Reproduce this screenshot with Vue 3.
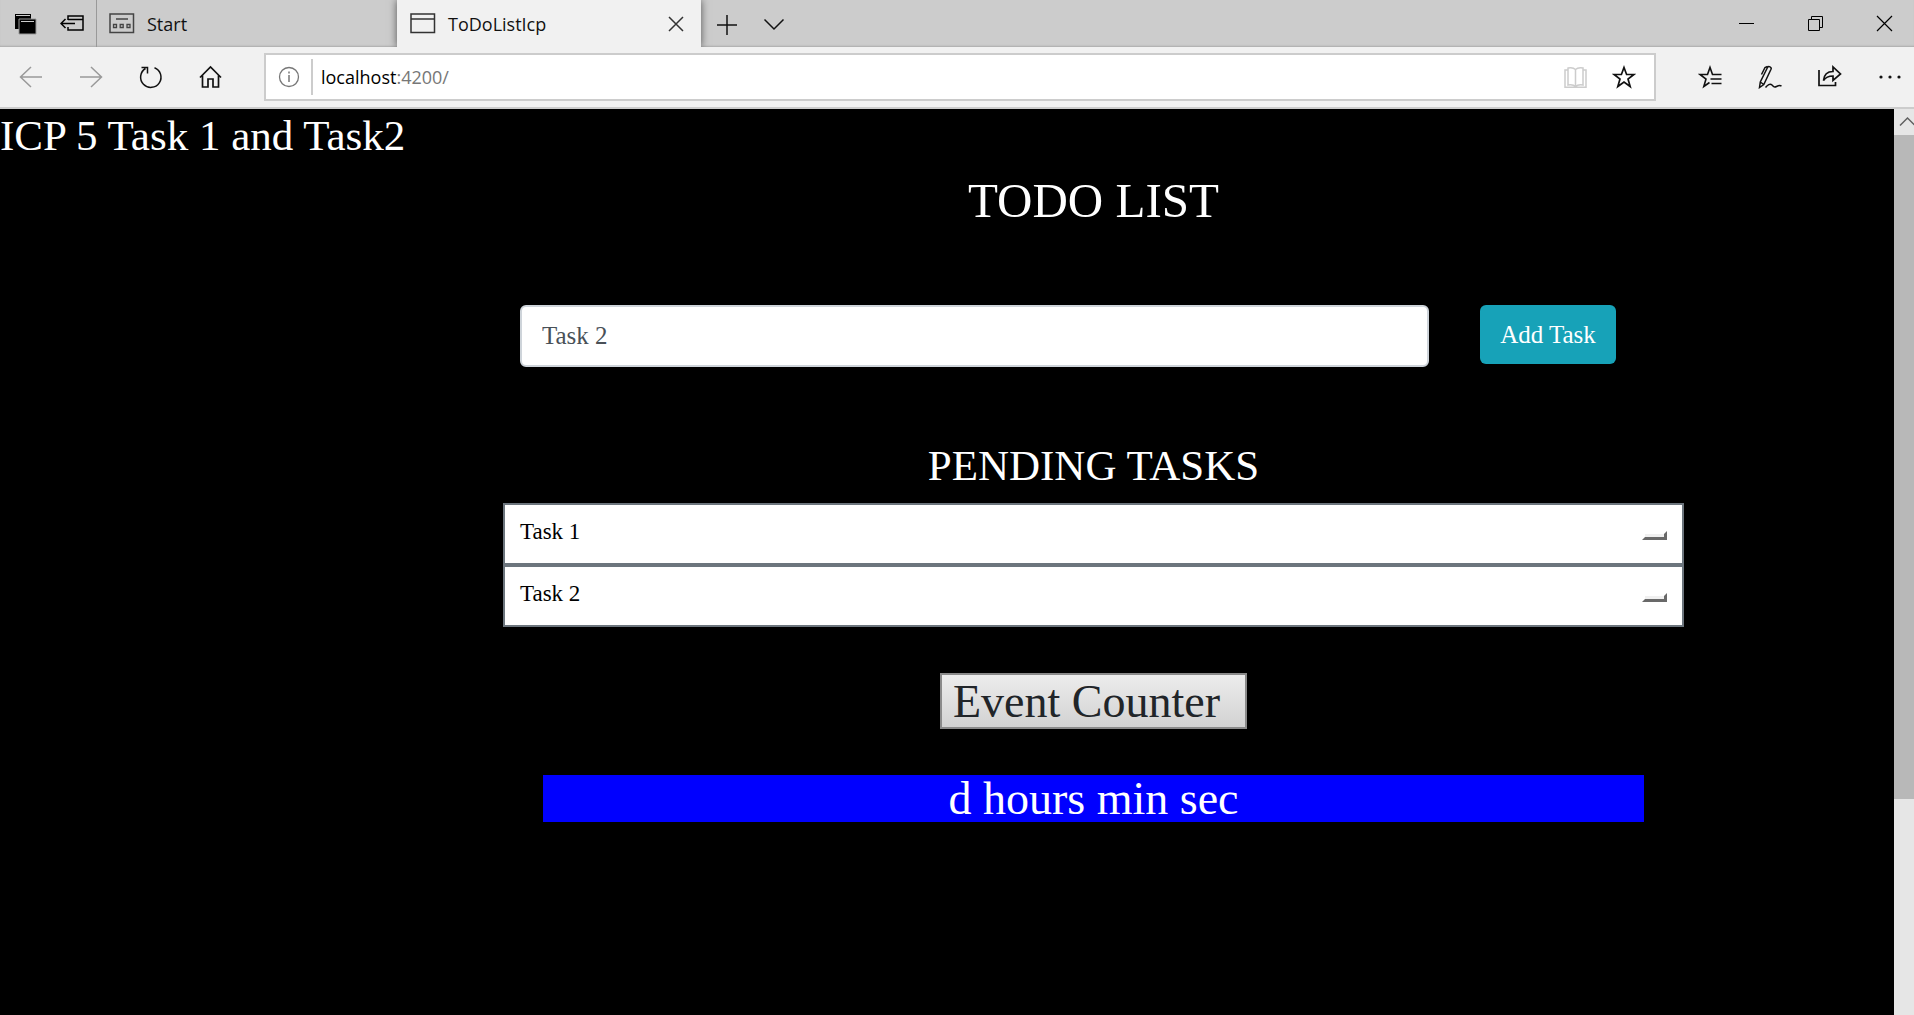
<script setup>
import { ref } from 'vue'

const draft = ref('Task 2')
const tasks = ref(['Task 1', 'Task 2'])

function addTask() {
  if (draft.value.trim()) tasks.value.push(draft.value.trim())
}

function removeTask(index) {
  tasks.value.splice(index, 1)
}
</script>

<template>
  <div class="browser">
    <header class="tabbar">
      <div class="tab-tools">
        <button class="icon" aria-label="Tabs you've set aside">
          <svg width="24" height="24" viewBox="0 0 24 24">
            <path d="M1 2h16v15H1z" fill="#000" />
            <path d="M2 3.500h14" stroke="#ccc" />
            <path d="M5 7h17v15H5z" fill="#000" stroke="#999" stroke-width="1" />
            <path d="M7 9.500h13" stroke="#ccc" />
          </svg>
        </button>
        <button class="icon" aria-label="Set these tabs aside">
          <svg width="24" height="24" viewBox="0 0 24 24" fill="none" stroke="#000" stroke-width="1.500">
            <path d="M8 8V4h15v14H8v-3M8 7.500h15M1 11.500h14M5.500 7L1 11.500 5.500 16" />
          </svg>
        </button>
      </div>
      <button class="tab tab-start">
        <svg width="26" height="24" viewBox="0 0 26 24" fill="none" stroke="#444" stroke-width="1.500">
          <path d="M1 2h23.500v18.500H1zM7 7h12" />
          <path d="M4.500 12.500h3v3h-3zM11.200 12.500h3v3h-3zM18 12.500h3v3h-3z" stroke-width="1.300" />
        </svg>
        <span>Start</span>
      </button>
      <div class="tab tab-active">
        <svg width="26" height="24" viewBox="0 0 26 24" fill="none" stroke="#333" stroke-width="1.500">
          <path d="M1 2h23.500v18.500H1zM1 7h23.500" />
        </svg>
        <span class="tab-title">ToDoListIcp</span>
        <button class="icon" aria-label="Close tab">
          <svg width="24" height="24" viewBox="0 0 24 24" fill="none" stroke="#333" stroke-width="1.500">
            <path d="M6 5l14 14M20 5L6 19" />
          </svg>
        </button>
      </div>
      <div class="new-tab">
        <button class="icon" aria-label="New tab">
          <svg width="24" height="24" viewBox="0 0 24 24" fill="none" stroke="#111" stroke-width="1.500">
            <path d="M2 13h20M12 3v20" />
          </svg>
        </button>
        <button class="icon" aria-label="Show tab previews">
          <svg width="24" height="24" viewBox="0 0 24 24" fill="none" stroke="#111" stroke-width="1.500">
            <path d="M2.500 7.500l9.500 9.500 9.500-9.500" />
          </svg>
        </button>
      </div>
      <div class="window-controls">
        <button class="icon" aria-label="Minimize">
          <svg width="24" height="24" viewBox="0 0 24 24" stroke="#000"><path d="M5 11.500h15" /></svg>
        </button>
        <button class="icon" aria-label="Restore">
          <svg width="24" height="24" viewBox="0 0 24 24" fill="none" stroke="#000">
            <path d="M5.500 7.500h11v11h-11zM8.500 7.500v-3h11v11h-3" />
          </svg>
        </button>
        <button class="icon" aria-label="Close window">
          <svg width="24" height="24" viewBox="0 0 24 24" stroke="#000" stroke-width="1.200">
            <path d="M5 4l15 15M20 4L5 19" />
          </svg>
        </button>
      </div>
    </header>

    <nav class="toolbar">
      <div class="nav-buttons">
        <button class="icon" aria-label="Back">
          <svg width="24" height="24" viewBox="0 0 24 24" fill="none" stroke="#999" stroke-width="1.500">
            <path d="M23 12H1.500M12 2L1.500 12 12 22" />
          </svg>
        </button>
        <button class="icon" aria-label="Forward">
          <svg width="24" height="24" viewBox="0 0 24 24" fill="none" stroke="#999" stroke-width="1.500">
            <path d="M1 12h21.500M12 2l10.500 10L12 22" />
          </svg>
        </button>
        <button class="icon" aria-label="Refresh">
          <svg width="24" height="24" viewBox="0 0 24 24" fill="none" stroke="#111" stroke-width="1.500">
            <path d="M15.500 2.700A10.200 10.200 0 1 1 6.500 3.500M2.500 2.500h6v6" />
          </svg>
        </button>
        <button class="icon" aria-label="Home">
          <svg width="24" height="24" viewBox="0 0 24 24" fill="none" stroke="#111" stroke-width="1.700">
            <path d="M1 12.500L11.500 2 22 12.500M3.500 10.500V22H9v-8h5v8h5.500V10.500" />
          </svg>
        </button>
      </div>
      <div class="address">
        <button class="icon" aria-label="Site information">
          <svg width="24" height="24" viewBox="0 0 24 24" fill="none" stroke="#777" stroke-width="1.300">
            <circle cx="12" cy="12" r="9.500" />
            <path d="M12 10v7M12 6.500v2" stroke-width="1.500" />
          </svg>
        </button>
        <div class="url"><span>localhost</span><span class="port">:4200/</span></div>
        <button class="icon" aria-label="Reading view">
          <svg width="24" height="24" viewBox="0 0 24 24" fill="none" stroke="#ccc" stroke-width="1.500">
            <path d="M11.500 4.500C9.500 2.500 6.500 2.500 4 3v17c3-.5 5.500-.5 7.500 1.500 2-2 4.500-2 7.500-1.500V3c-3-.5-5.500-.5-7.500 1.500zV21M4 5H1v17.200h21V5h-3" />
          </svg>
        </button>
        <button class="icon" aria-label="Add to favorites">
          <svg width="24" height="24" viewBox="0 0 24 24" fill="none" stroke="#111" stroke-width="1.700">
            <path d="M12 2.500l2.600 7h7.300l-5.900 4.500 2.200 7.500L12 17l-6.200 4.500L8 14 2.100 9.500h7.300z" />
          </svg>
        </button>
      </div>
      <div class="actions">
        <button class="icon" aria-label="Favorites hub">
          <svg width="24" height="24" viewBox="0 0 24 24" fill="none" stroke="#111" stroke-width="1.600">
            <path d="M23.500 9.500h-9L12 2.500l-2.500 7H2L8 14l-2.200 7.500 5.700-4M12.500 14h11M13.500 18.500h10" />
          </svg>
        </button>
        <button class="icon" aria-label="Add notes">
          <svg width="24" height="24" viewBox="0 0 24 24" fill="none" stroke="#111" stroke-width="1.500">
            <path d="M1.500 22.500l.8-5.500L9.500 2.500c1-1.800 4.500-.5 3.500 1.800L5.800 19.500zM9.500 1.500L7 2.500 3.500 9.500M2.300 17l3.500 2.500M7.500 22.500c2-2.500 4.500-4.500 6.500-2.500s2.500 2.500 4.500 1.500 3-1.500 5-.5" />
          </svg>
        </button>
        <button class="icon" aria-label="Share">
          <svg width="24" height="24" viewBox="0 0 24 24" fill="none" stroke="#111" stroke-width="1.700">
            <path d="M1 5v15.500h16.500v-3.500M5.500 15.500c.5-5.500 4-9 9.500-9v-4.500L22.500 9 15 15.500V11c-4.500 0-7.500 1.500-9.500 4.500z" />
          </svg>
        </button>
        <button class="icon" aria-label="Settings and more">
          <svg width="24" height="24" viewBox="0 0 24 24" fill="#111">
            <circle cx="3" cy="12" r="1.600" /><circle cx="12" cy="12" r="1.600" /><circle cx="21" cy="12" r="1.600" />
          </svg>
        </button>
      </div>
    </nav>

    <div class="viewport">
      <main class="page">
        <h1>ICP 5 Task 1 and Task2</h1>
        <div class="columns">
          <section class="todo">
            <h2 class="title">TODO LIST</h2>
            <form class="entry" @submit.prevent="addTask">
              <input v-model="draft" class="entry-input" type="text" aria-label="New task" />
              <button class="entry-add" type="submit">Add Task</button>
            </form>
            <h3 class="subtitle">PENDING TASKS</h3>
            <ul class="tasks">
              <li v-for="(task, index) in tasks" :key="index" class="task">
                <span>{{ task }}</span>
                <button class="remove" :aria-label="'Remove ' + task" @click="removeTask(index)"></button>
              </li>
            </ul>
            <button class="counter-button">Event Counter</button>
            <p class="countdown">d hours min sec</p>
          </section>
        </div>
      </main>
      <div class="scrollbar" aria-hidden="true">
        <div class="scroll-up">
          <svg width="20" height="26" viewBox="0 0 20 26" fill="none" stroke="#606060" stroke-width="1.500">
            <path d="M6 16.500L13.500 9l7.500 7.500" />
          </svg>
        </div>
        <div class="scroll-thumb"></div>
        <div class="scroll-rest"></div>
      </div>
    </div>
  </div>
</template>

<style>
body {
  margin: 0;
}
</style>

<style scoped>
.browser {
  display: flex;
  flex-direction: column;
  min-height: 100vh;
  font-family: "Open Sans", "Noto Sans", sans-serif;
  font-size: 18px;
  color: #111;
}

.browser *,
.browser {
  box-sizing: border-box;
}

button,
input {
  margin: 0;
  padding: 0;
  border: 0;
  background: none;
  font: inherit;
  color: inherit;
}

.icon {
  display: flex;
  flex: none;
}

svg {
  display: block;
  flex: none;
}

/* Tab strip */
.tabbar {
  display: flex;
  height: 47px;
  background: #ccc;
  box-shadow: inset 0 -2px 2px -1px #aaa;
}

.tab-tools {
  display: flex;
  align-items: center;
  gap: 22px;
  padding: 0 12px 0 14px;
  border-right: 1px solid #999;
}

.tab {
  display: flex;
  align-items: center;
  gap: 12px;
  line-height: 24px;
  text-align: left;
}

.tab-start {
  width: 300px;
  padding-left: 12px;
}

.tab-active {
  width: 304px;
  padding: 0 14px 0 13px;
  background: #f1f1f1;
  box-shadow: 0 0 8px rgba(0, 0, 0, 0.6);
  clip-path: inset(0 -12px 0 -12px);
}

.tab-title {
  flex: 1;
}

.new-tab {
  display: flex;
  align-items: center;
  gap: 23px;
  padding-left: 14px;
}

.window-controls {
  display: flex;
  align-items: center;
  gap: 45px;
  margin-left: auto;
  padding-right: 18px;
}

/* Address bar */
.toolbar {
  display: flex;
  align-items: center;
  height: 62px;
  background: #f1f1f1;
  border-bottom: 2px solid #ccc;
}

.nav-buttons {
  display: flex;
  gap: 36px;
  padding: 0 41px 0 19px;
}

.address {
  display: flex;
  flex: 1;
  align-items: center;
  gap: 24px;
  height: 48px;
  padding: 0 18px 0 11px;
  background: #fff;
  border: 2px solid #ccc;
}

.url {
  flex: 1;
  margin-left: -14px;
  padding-left: 8px;
  border-left: 2px solid #ccc;
  line-height: 36px;
  color: #000;
}

.port {
  color: #777;
}

.actions {
  display: flex;
  gap: 36px;
  padding: 0 12px 0 42px;
}

/* Web page */
.viewport {
  display: flex;
  flex: 1;
  background: #000;
}

.page {
  flex: 1;
  font-family: "Liberation Serif", "Times New Roman", serif;
  color: #fff;
}

h1,
h2,
h3,
p,
ul {
  margin: 0;
  padding: 0;
  font-weight: 400;
}

h1,
.subtitle {
  font-size: 43px;
  line-height: 52px;
}

h1 {
  padding-top: 1px;
}

.columns {
  display: grid;
  grid-template-columns: 503fr 1181fr 210fr;
}

.todo {
  display: flex;
  grid-column: 2;
  flex-direction: column;
  padding-top: 10px;
  text-align: center;
}

.title {
  font-size: 49px;
  line-height: 58px;
}

.entry {
  display: flex;
  align-items: flex-start;
  gap: 51px;
  margin: 75px 68px 73px 17px;
  font-size: 25px;
}

.entry-input {
  flex: 1;
  min-width: 0;
  height: 62px;
  padding: 0 20px;
  background: #fff;
  border: 2px solid #ced4da;
  border-radius: 6px;
  color: #495057;
}

.entry-add {
  width: 136px;
  height: 59px;
  background: #17a2b8;
  border-radius: 6px;
  color: #fff;
}

.tasks {
  margin-top: 11px;
  list-style: none;
}

.task {
  display: flex;
  align-items: center;
  justify-content: space-between;
  height: 62px;
  padding: 0 15px 4px;
  background: #fff;
  border: 2px solid #6c757d;
  font-size: 23px;
  line-height: 32px;
  color: #000;
}

.remove {
  width: 25px;
  height: 9px;
  margin-top: 6px;
  background: #f0f0f0;
  border: 3px solid;
  border-color: #fff #696969 #696969 #fff;
}

.counter-button {
  align-self: center;
  height: 56px;
  margin: 46px 0;
  padding: 2px 25px 0 11px;
  background: linear-gradient(#ececec, #d2d2d2);
  border: 2px solid #8a8a8a;
  font-size: 46px;
  line-height: 50px;
  color: #212529;
}

.countdown {
  margin: 0 40px;
  background: #00f;
  font-size: 46px;
  line-height: 47px;
}

/* Page scrollbar */
.scrollbar {
  display: flex;
  flex-direction: column;
  width: 20px;
  background: #e6e6e6;
}

.scroll-thumb {
  flex: 664;
  background: #b8b8b8;
}

.scroll-rest {
  flex: 216;
}
</style>
